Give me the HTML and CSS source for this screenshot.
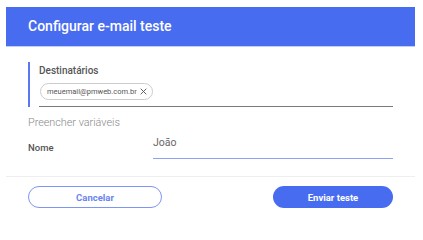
FILE: index.html
```html
<!DOCTYPE html>
<html lang="pt">
<head>
<meta charset="utf-8">
<link rel="stylesheet" href="styles.css">
</head>
<body>
<div class="dialog">
  <div class="header">Configurar e-mail teste</div>
  <div class="content">
    <div class="recipients">
      <div class="label">Destinatários</div>
      <div class="chips">
        <span class="chip">meuemail@pmweb.com.br <svg class="chip-x" viewBox="0 0 10 10" width="7" height="7"><path d="M1 1L9 9M9 1L1 9" stroke="#555" stroke-width="1.3" fill="none"/></svg></span>
      </div>
    </div>
    <div class="section-title">Preencher variáveis</div>
    <div class="var-row">
      <div class="var-name">Nome</div>
      <div class="var-input">João</div>
    </div>
  </div>
  <div class="footer">
    <button class="btn btn-outline">Cancelar</button>
    <button class="btn btn-primary">Enviar teste</button>
  </div>
</div>
</body>
</html>
```
FILE: styles.css
```css
html, body {
  margin: 0;
  padding: 0;
  background: #ffffff;
  font-family: Roboto, "Liberation Sans", Arial, sans-serif;
}
.dialog {
  margin: 7px 0 0 6px;
  width: 409px;
}
.header {
  height: 39px;
  background: #486cf0;
  border-bottom: 1px solid #c3cdfa;
  color: #ffffff;
  font-size: 14px;
  font-weight: 500;
  line-height: 39px;
  padding-left: 22px;
}
.content {
  padding: 15px 22px 0 22px;
}
.recipients {
  border-left: 2px solid #5a78f2;
  padding: 3px 0 0 9px;
}
.label {
  font-size: 10px;
  font-weight: 500;
  color: #555555;
  line-height: 12px;
}
.chips {
  display: flex;
  margin-top: 6px;
  padding-bottom: 6px;
  border-bottom: 1.5px solid #7a7a7a;
}
.chip {
  display: flex;
  align-items: center;
  gap: 3px;
  height: 15px;
  padding: 0 5px 0 6px;
  margin-left: 1px;
  border: 1px solid #cccccc;
  border-radius: 9px;
  font-size: 7.5px;
  color: #555555;
}
.chip-x {
  display: block;
}
.section-title {
  margin-top: 9px;
  font-size: 10.8px;
  font-weight: 300;
  color: #888888;
  line-height: 14px;
}
.var-row {
  display: flex;
  align-items: flex-end;
  margin-top: 7px;
}
.var-name {
  width: 125px;
  font-size: 9.5px;
  font-weight: 500;
  color: #555555;
  line-height: 11px;
  padding-bottom: 6px;
}
.var-input {
  flex: 1;
  font-size: 10.5px;
  color: #666666;
  line-height: 12px;
  padding-bottom: 9px;
  border-bottom: 1px solid #8ea2f5;
}
.footer {
  margin-top: 17px;
  border-top: 1px solid #eeeeee;
  padding: 9px 22px 0 22px;
  display: flex;
  justify-content: space-between;
}
.btn {
  height: 22px;
  border-radius: 11px;
  font-family: Roboto, "Liberation Sans", Arial, sans-serif;
  font-size: 9.5px;
  font-weight: 700;
  padding: 0;
  cursor: pointer;
}
.btn-outline {
  width: 134px;
  background: #ffffff;
  border: 1px solid #7d95f5;
  color: #6a84f2;
}
.btn-primary {
  width: 120px;
  background: #486cf0;
  border: none;
  color: #ffffff;
}
```
